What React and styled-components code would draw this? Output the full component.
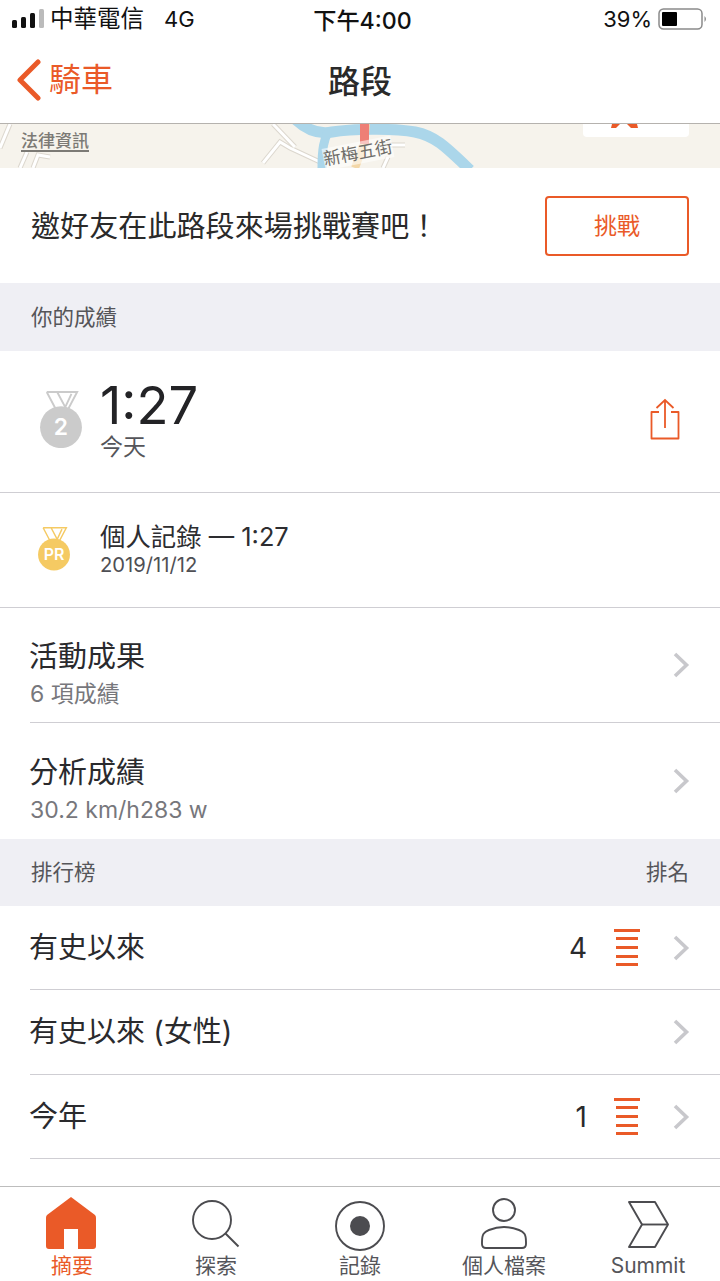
import React from 'react';
import styled, { createGlobalStyle } from 'styled-components';

const orange = '#ea5a28';
const FONT = 'Inter, "Noto Sans CJK TC", sans-serif';

const GlobalStyle = createGlobalStyle`
  html, body { margin: 0; padding: 0; background: #fff; }
  * { box-sizing: border-box; }
`;

const Page = styled.div`
  width: 720px;
  height: 1281px;
  display: flex;
  flex-direction: column;
  overflow: hidden;
  background: #fff;
  font-family: ${FONT};
  color: #252528;
`;

// status bar
const StatusBar = styled.div`
  height: 40px;
  flex: none;
  padding: 0 12px 3px 12px;
  display: grid;
  grid-template-columns: 1fr auto 1fr;
  align-items: center;
  font-size: 23px;
  color: #111;
`;
const StatusLeft = styled.div`
  display: flex;
  align-items: center;
`;
const Carrier = styled.span`
  margin-left: 6px;
  font-size: 23.5px;
  line-height: 30px;
`;
const Network = styled.span`
  margin-left: 20px;
  font-size: 22px;
`;
const StatusTime = styled.div`
  margin-left: 5px;
  font-size: 23.2px;
  font-weight: 500;
`;
const StatusRight = styled.div`
  display: flex;
  align-items: center;
  justify-content: flex-end;
  gap: 6px;
  font-size: 22px;
`;

// nav bar
const NavBar = styled.div`
  height: 84px;
  flex: none;
  position: relative;
  display: flex;
  align-items: center;
  justify-content: center;
  padding-bottom: 6px;
  border-bottom: 1px solid #b5b2ae;
`;
const BackLink = styled.div`
  position: absolute;
  left: 16px;
  top: 18px;
  display: flex;
  align-items: center;
  gap: 7px;
  color: ${orange};
  font-size: 32px;
  line-height: 44px;
`;
const NavTitle = styled.div`
  font-size: 32px;
  font-weight: 500;
  color: #2a2a2a;
`;

// map strip
const MapStrip = styled.div`
  height: 44px;
  flex: none;
  position: relative;
  overflow: hidden;
  background: #f6f3ec;
`;
const MapArt = styled.svg`
  display: block;
`;
const LegalLink = styled.span`
  position: absolute;
  left: 21px;
  top: 8px;
  font-size: 17px;
  line-height: 18px;
  font-weight: 500;
  color: #7c7a75;
  border-bottom: 2px solid #7c7a75;
`;
const StreetLabel = styled.span`
  position: absolute;
  left: 323px;
  top: 18px;
  font-size: 17.5px;
  line-height: 22px;
  color: #6f6d69;
  background: rgba(255, 255, 255, 0.55);
  transform: rotate(-11deg);
`;

// challenge row
const ChallengeRow = styled.div`
  height: 115px;
  flex: none;
  padding: 0 31px;
  display: flex;
  align-items: center;
  justify-content: space-between;
`;
const ChallengeText = styled.div`
  font-size: 29px;
  letter-spacing: 0.1px;
  padding-bottom: 3px;
  color: #2a2a2a;
`;
const ChallengeButton = styled.button`
  width: 144px;
  height: 60px;
  padding: 0 0 4px;
  border: 2px solid ${orange};
  border-radius: 4px;
  background: #fff;
  color: ${orange};
  font-family: inherit;
  font-size: 23px;
`;

const SectionHeader = styled.div`
  height: ${(p) => p.$height}px;
  flex: none;
  padding: 0 31px 4px;
  display: flex;
  align-items: center;
  justify-content: space-between;
  background: #efeff4;
  color: #555559;
  font-size: 21.5px;
`;

// result rows
const ResultRow = styled.div`
  height: ${(p) => p.$height}px;
  flex: none;
  display: flex;
  align-items: center;
  border-bottom: 1px solid #cfced3;
`;
const MedalCell = styled.div`
  width: 100px;
  flex: none;
  display: flex;
  justify-content: center;
  padding-bottom: ${(p) => p.$lift}px;
  margin-left: ${(p) => p.$shift}px;
  margin-right: ${(p) => -p.$shift}px;
`;
const ResultBody = styled.div`
  flex: 1;
  display: flex;
  flex-direction: column;
`;
const BigTime = styled.div`
  font-size: 52.5px;
  line-height: 50px;
  margin-top: -2px;
  color: #232326;
`;
const SmallNote = styled.div`
  font-size: 23px;
  line-height: 28px;
  margin-top: 3px;
  color: #55555a;
`;
const RecordTitle = styled.div`
  font-size: 25.4px;
  line-height: 30px;
  color: #2d2d30;
`;
const RecordDate = styled.div`
  font-size: 20.2px;
  line-height: 26px;
  color: #4f4f54;
`;
const ShareCell = styled.div`
  width: 82px;
  flex: none;
  display: flex;
  justify-content: center;
  padding: 0 28px 5px 0;
`;

// list rows
const DetailRow = styled.div`
  height: ${(p) => p.$height}px;
  flex: none;
  margin-left: 30px;
  padding-right: 30px;
  display: flex;
  align-items: center;
  justify-content: space-between;
  border-bottom: ${(p) => (p.$last ? 'none' : '1px solid #cfced3')};
`;
const DetailText = styled.div`
  display: flex;
  flex-direction: column;
  gap: 4px;
  padding-top: 16px;
`;
const RowTitle = styled.div`
  font-size: 29px;
  line-height: 38px;
  margin-left: -1px;
  color: #2a2a2d;
`;
const RowSub = styled.div`
  font-size: 23px;
  line-height: 28px;
  color: #77777c;
`;
const RowRight = styled.div`
  display: flex;
  align-items: center;
`;
const RankNumber = styled.span`
  font-size: 28px;
  color: #2a2a2d;
  margin-right: 27px;
`;
const RankBars = styled.div`
  width: 26px;
  margin-right: 33px;
  display: flex;
  flex-direction: column;
  align-items: center;
  gap: 5.6px;
`;
const RankBar = styled.div`
  height: 3px;
  width: ${(p) => (p.$wide ? 26 : 22)}px;
  background: ${orange};
`;

const Spacer = styled.div`
  flex: 1;
`;

// tab bar
const TabBar = styled.div`
  height: 95px;
  flex: none;
  display: grid;
  grid-template-columns: repeat(5, 1fr);
  border-top: 1px solid #bdbdbd;
`;
const Tab = styled.div`
  display: flex;
  flex-direction: column;
  align-items: center;
  color: ${(p) => (p.$active ? orange : '#55555a')};
  font-size: 21px;
  line-height: 26px;
`;
const TabIcon = styled.div`
  height: 66px;
  display: flex;
  align-items: flex-start;
  padding-top: ${(p) => p.$top}px;
  margin-left: ${(p) => p.$shift || 0}px;
`;

const Chevron = () => (
  <svg width="17" height="26" viewBox="0 0 17 26" fill="none">
    <path d="M2 2 L13.5 13 L2 24" stroke="#c8c8cc" strokeWidth="3.6" />
  </svg>
);

const SignalIcon = () => (
  <svg width="32" height="20" viewBox="0 0 32 20">
    <rect x="0" y="11" width="5" height="8" rx="1.5" fill="#111" />
    <rect x="9" y="8" width="5" height="11" rx="1.5" fill="#111" />
    <rect x="18" y="4" width="5" height="15" rx="1.5" fill="#111" />
    <rect x="27" y="0" width="5" height="19" rx="1.5" fill="#bbb" />
  </svg>
);

const BatteryIcon = () => (
  <svg width="50" height="22" viewBox="0 0 50 22">
    <rect x="1" y="1" width="43" height="20" rx="4.5" fill="none" stroke="#8a8a8a" strokeWidth="1.5" />
    <rect x="4" y="4" width="15" height="14" rx="1" fill="#000" />
    <path d="M46.5 8 Q49.5 11 46.5 14 Z" fill="#8a8a8a" />
  </svg>
);

const MedalIcon = ({ color, size, label, fontSize }) => (
  <svg width={size} height={size * 1.36} viewBox="0 0 44 60">
    <path d="M7 1 H39 L29 20 L25 20 L33 3 M7 1 L17 20 M18 1 L27 18" fill="none" stroke={color} strokeWidth="2" />
    <circle cx="22" cy="38" r="22" fill={color} />
    <text x="22" y="38" dy="0.36em" textAnchor="middle" fill="#fff" fontFamily="Inter, sans-serif" fontWeight="600" fontSize={fontSize}>
      {label}
    </text>
  </svg>
);

const ShareIcon = () => (
  <svg width="30" height="42" viewBox="0 0 30 42" fill="none" stroke={orange} strokeWidth="1.8">
    <path d="M9 14 H1.5 V40.5 H28.5 V14 H21" strokeLinejoin="round" />
    <path d="M15 30 V2 M6.5 10 L15 2 L23.5 10" />
  </svg>
);

const RankIcon = () => (
  <RankBars>
    <RankBar $wide />
    <RankBar />
    <RankBar />
    <RankBar />
    <RankBar />
  </RankBars>
);

const roads = [
  'M10 0 L0 24',
  'M20 44 L27 28',
  'M33 44 L38 31 L50 33',
  'M273 0 L295 23',
  'M263 39 L280 18 L290 24 L320 38',
  'M383 44 L388 33',
  'M387 21 L405 21',
];

const MapDrawing = () => (
  <MapArt width="720" height="44" viewBox="0 0 720 44" fill="none">
    <g stroke="#dcd7ce" strokeWidth="5">
      {roads.map((d) => <path key={d} d={d} />)}
    </g>
    <g stroke="#fff" strokeWidth="3">
      {roads.map((d) => <path key={d} d={d} />)}
    </g>
    <path d="M294 -6 C304 4 316 11 332 8 C350 5 395 4 415 8 C435 12 445 22 470 46" stroke="#abd6ea" strokeWidth="11" />
    <path d="M328 8 C324 16 322 24 322 44" stroke="#abd6ea" strokeWidth="9" />
    <path d="M366 0 L364 20 L355 44" stroke="#f3d7a8" strokeWidth="8" />
    <rect x="360" y="0" width="9" height="20" fill="#ee7f76" />
    <path d="M583 0 H689 V9 Q689 13 685 13 H587 Q583 13 583 9 Z" fill="#fff" />
    <path d="M612 0 H620 L616 4 H611 Z M627 0 H637 L638 4 H631 Z" fill={orange} />
  </MapArt>
);

const HomeIcon = () => (
  <svg width="52" height="54" viewBox="0 0 52 54">
    <path d="M26 1 L50 19 Q51 20 51 22 V50 Q51 53 48 53 H33 V33 H19 V53 H4 Q1 53 1 50 V22 Q1 20 2 19 Z" fill={orange} />
  </svg>
);

const SearchIcon = () => (
  <svg width="48" height="48" viewBox="0 0 48 48" fill="none" stroke="#4c4c50" strokeWidth="1.9">
    <circle cx="20" cy="20" r="19" />
    <path d="M33.5 33.5 L46.5 46.5" />
  </svg>
);

const RecordIcon = () => (
  <svg width="50" height="50" viewBox="0 0 50 50">
    <circle cx="25" cy="25" r="24" fill="none" stroke="#4c4c50" strokeWidth="1.9" />
    <circle cx="25" cy="25" r="10" fill="#4c4c50" />
  </svg>
);

const ProfileIcon = () => (
  <svg width="48" height="52" viewBox="0 0 48 52" fill="none" stroke="#4c4c50" strokeWidth="1.9">
    <circle cx="24" cy="12" r="11" />
    <path d="M2 44 C2 36 4 34 9 32 C19 28 29 28 39 32 C44 34 46 36 46 44 V46 Q46 50 42 50 H6 Q2 50 2 46 Z" />
  </svg>
);

const SummitIcon = () => (
  <svg width="41" height="47" viewBox="0 0 41 47" fill="none" stroke="#4c4c50" strokeWidth="1.9" strokeLinejoin="round">
    <path d="M1 1 H27 L40 23.5 L27 46 H1 L14 23.5 Z" />
    <path d="M14 23.5 H40" />
  </svg>
);

const App = () => (
  <Page>
    <GlobalStyle />
    <StatusBar>
      <StatusLeft>
        <SignalIcon />
        <Carrier>中華電信</Carrier>
        <Network>4G</Network>
      </StatusLeft>
      <StatusTime>下午4:00</StatusTime>
      <StatusRight>
        39%
        <BatteryIcon />
      </StatusRight>
    </StatusBar>

    <NavBar>
      <BackLink>
        <svg width="26" height="42" viewBox="0 0 26 42" fill="none">
          <path d="M22 3 L4 21 L22 39" stroke={orange} strokeWidth="5" strokeLinecap="round" strokeLinejoin="round" />
        </svg>
        騎車
      </BackLink>
      <NavTitle>路段</NavTitle>
    </NavBar>

    <MapStrip>
      <MapDrawing />
      <LegalLink>法律資訊</LegalLink>
      <StreetLabel>新梅五街</StreetLabel>
    </MapStrip>

    <ChallengeRow>
      <ChallengeText>邀好友在此路段來場挑戰賽吧！</ChallengeText>
      <ChallengeButton>挑戰</ChallengeButton>
    </ChallengeRow>

    <SectionHeader $height={68}>你的成績</SectionHeader>

    <ResultRow $height={142}>
      <MedalCell $shift={11} $lift={4}>
        <MedalIcon color="#cbcbcb" size={42} label="2" fontSize="24" />
      </MedalCell>
      <ResultBody>
        <BigTime>1:27</BigTime>
        <SmallNote>今天</SmallNote>
      </ResultBody>
      <ShareCell>
        <ShareIcon />
      </ShareCell>
    </ResultRow>

    <ResultRow $height={115}>
      <MedalCell $shift={4} $lift={2}>
        <MedalIcon color="#f5ca63" size={32} label="PR" fontSize="22" />
      </MedalCell>
      <ResultBody>
        <RecordTitle>個人記錄 — 1:27</RecordTitle>
        <RecordDate>2019/11/12</RecordDate>
      </ResultBody>
    </ResultRow>

    <DetailRow $height={115}>
      <DetailText>
        <RowTitle>活動成果</RowTitle>
        <RowSub>6 項成績</RowSub>
      </DetailText>
      <Chevron />
    </DetailRow>
    <DetailRow $height={116} $last>
      <DetailText>
        <RowTitle>分析成績</RowTitle>
        <RowSub>30.2 km/h283 w</RowSub>
      </DetailText>
      <Chevron />
    </DetailRow>

    <SectionHeader $height={67}>
      <span>排行榜</span>
      <span>排名</span>
    </SectionHeader>

    <DetailRow $height={84}>
      <RowTitle>有史以來</RowTitle>
      <RowRight>
        <RankNumber>4</RankNumber>
        <RankIcon />
        <Chevron />
      </RowRight>
    </DetailRow>
    <DetailRow $height={85}>
      <RowTitle>有史以來 (女性)</RowTitle>
      <Chevron />
    </DetailRow>
    <DetailRow $height={84}>
      <RowTitle>今年</RowTitle>
      <RowRight>
        <RankNumber>1</RankNumber>
        <RankIcon />
        <Chevron />
      </RowRight>
    </DetailRow>

    <Spacer />

    <TabBar>
      <Tab $active>
        <TabIcon $top={9} $shift={-2}><HomeIcon /></TabIcon>
        摘要
      </Tab>
      <Tab>
        <TabIcon $top={13}><SearchIcon /></TabIcon>
        探索
      </Tab>
      <Tab>
        <TabIcon $top={14}><RecordIcon /></TabIcon>
        記錄
      </Tab>
      <Tab>
        <TabIcon $top={11}><ProfileIcon /></TabIcon>
        個人檔案
      </Tab>
      <Tab>
        <TabIcon $top={14}><SummitIcon /></TabIcon>
        Summit
      </Tab>
    </TabBar>
  </Page>
);

export default App;
